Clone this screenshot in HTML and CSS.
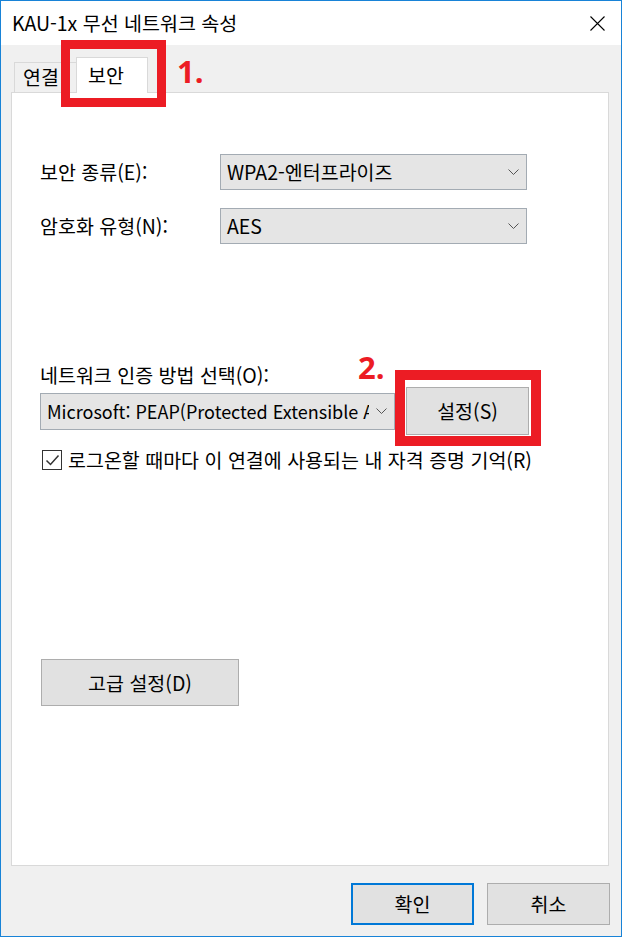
FILE: index.html
```html
<!DOCTYPE html>
<html lang="ko">
<head>
<meta charset="utf-8">
<title>KAU-1x 무선 네트워크 속성</title>
<link rel="stylesheet" href="styles.css">
</head>
<body>
<div class="window">
  <div class="titlebar">
    <span class="title">KAU-1x 무선 네트워크 속성</span>
    <svg class="close" width="15" height="15" viewBox="0 0 15 15"><path d="M0.5 0.5 L14.5 14.5 M14.5 0.5 L0.5 14.5" stroke="#000" stroke-width="1.1" fill="none"/></svg>
  </div>
  <div class="client">
    <div class="tabs">
      <div class="tab">연결</div>
      <div class="tab active">보안</div>
      <div class="mark mark1"></div>
      <div class="num num1">1.</div>
    </div>
    <div class="panel">
      <div class="fields">
        <label class="lbl">보안 종류(E):</label>
        <div class="combo"><span>WPA2-엔터프라이즈</span><svg class="chev" width="11" height="6" viewBox="0 0 11 6"><path d="M0.5 0.5 L5.5 5.5 L10.5 0.5" stroke="#555" fill="none"/></svg></div>
        <label class="lbl">암호화 유형(N):</label>
        <div class="combo"><span>AES</span><svg class="chev" width="11" height="6" viewBox="0 0 11 6"><path d="M0.5 0.5 L5.5 5.5 L10.5 0.5" stroke="#555" fill="none"/></svg></div>
      </div>
      <div class="auth">
        <div class="lbl auth-label">네트워크 인증 방법 선택(O):</div>
        <div class="auth-row">
          <div class="combo wide"><span class="clip">Microsoft: PEAP(Protected Extensible Authentication Protocol)</span><svg class="chev" width="11" height="6" viewBox="0 0 11 6"><path d="M0.5 0.5 L5.5 5.5 L10.5 0.5" stroke="#555" fill="none"/></svg></div>
          <div class="btn settings">설정(S)</div>
          <div class="mark mark2"></div>
          <div class="num num2">2.</div>
        </div>
        <div class="check-row">
          <span class="checkbox"><svg width="15" height="13" viewBox="0 0 15 13"><path d="M1.5 6.5 L5.5 10.5 L13.5 1.5" stroke="#333" stroke-width="1.5" fill="none"/></svg></span>
          <span>로그온할 때마다 이 연결에 사용되는 내 자격 증명 기억(R)</span>
        </div>
      </div>
      <div class="btn advanced">고급 설정(D)</div>
    </div>
    <div class="footer">
      <div class="btn foot default">확인</div>
      <div class="btn foot">취소</div>
    </div>
  </div>
</div>
</body>
</html>
```

FILE: styles.css
```css
* { box-sizing: border-box; }
html, body { margin: 0; padding: 0; background: #ffffff; }
body {
  font-family: "Noto Sans CJK KR", "Noto Sans", sans-serif;
  font-size: 19.5px;
  color: #000;
}
.window {
  width: 622px;
  height: 937px;
  border: 1px solid #1883d7;
  display: flex;
  flex-direction: column;
  background: #f0f0f0;
}
.titlebar {
  height: 44px;
  background: #fff;
  display: flex;
  align-items: center;
  justify-content: space-between;
  padding: 0 16px 0 11px;
}
.title { line-height: 24px; }
.client {
  flex: 1;
  display: flex;
  flex-direction: column;
}
.tabs {
  position: relative;
  height: 47px;
  display: flex;
  align-items: flex-end;
  padding-left: 13px;
}
.tab {
  height: 30px;
  border: 1px solid #d9d9d9;
  border-bottom: none;
  background: #f0f0f0;
  padding: 0 0 0 8px;
  line-height: 27px;
  width: 63px;
}
.tab.active {
  height: 36px;
  width: 72px;
  background: #fff;
  margin-bottom: -1px;
  position: relative;
  z-index: 1;
  padding-left: 11px;
  line-height: 34px;
  margin-left: -1px;
}
.mark {
  position: absolute;
  border: 9px solid #ec1c24;
  z-index: 3;
}
.mark1 { left: 60px; top: -5px; width: 105px; height: 67px; }
.num {
  position: absolute;
  color: #ec1c24;
  font-family: "Open Sans", "Noto Sans", sans-serif;
  font-weight: 700;
  font-size: 31px;
  line-height: 30px;
}
.num1 { left: 176px; top: 11px; }
.panel {
  height: 774px;
  margin: 0 12px 0 10px;
  background: #fff;
  border: 1px solid #d9d9d9;
  padding: 61px 0 0 28px;
}
.fields {
  display: grid;
  grid-template-columns: 180px 307px;
  grid-auto-rows: 36px;
  row-gap: 18px;
  align-items: center;
}
.lbl { line-height: 24px; }
.combo {
  height: 36px;
  background: #e5e5e5;
  border: 1px solid #a3abb3;
  display: flex;
  align-items: center;
  justify-content: space-between;
  padding: 0 7px 0 6px;
  line-height: 24px;
}
.chev { flex: none; }
.auth { margin-top: 119px; }
.auth-row {
  position: relative;
  display: flex;
  align-items: center;
  gap: 11px;
}
.combo.wide { width: 355px; height: 37px; overflow: hidden; }
.clip {
  white-space: nowrap;
  overflow: hidden;
  width: 322px;
  flex: none;
  font-size: 18px;
}
.btn {
  background: #e1e1e1;
  border: 1px solid #adadad;
  display: flex;
  align-items: center;
  justify-content: center;
  line-height: 24px;
}
.settings { width: 123px; height: 48px; }
.mark2 { left: 355px; top: -17px; width: 146px; height: 76px; border-width: 10px; }
.num2 { left: 318px; top: -35px; }
.check-row {
  margin-top: 15px;
  height: 20px;
  display: flex;
  align-items: center;
  gap: 6px;
  padding-left: 2px;
  line-height: 24px;
}
.checkbox {
  width: 20px;
  height: 20px;
  border: 1px solid #333;
  background: #fff;
  display: flex;
  align-items: center;
  justify-content: center;
  flex: none;
}
.advanced {
  margin: 189px 0 0 1px;
  width: 198px;
  height: 47px;
}
.footer {
  display: flex;
  justify-content: flex-end;
  gap: 13px;
  padding: 17px 11px 0 0;
}
.foot { width: 123px; height: 42px; }
.foot.default { border: 2px solid #0078d7; }
```
